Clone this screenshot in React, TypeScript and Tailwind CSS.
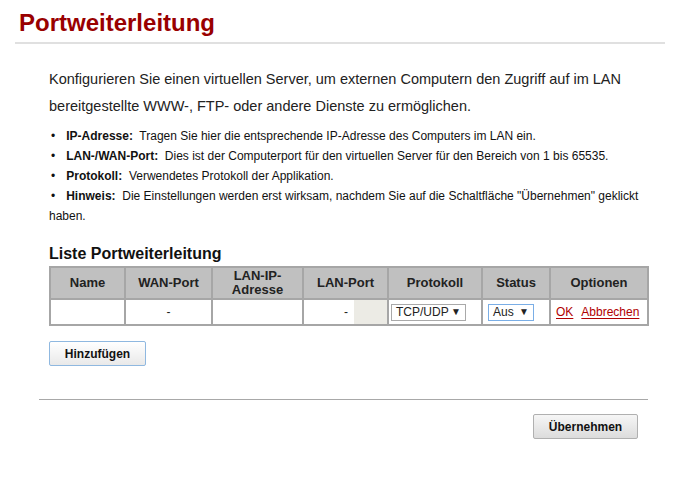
const FONT = { fontFamily: '"Liberation Sans", Arial, sans-serif' };

const BULLETS: [string, string][] = [
  ['IP-Adresse:', 'Tragen Sie hier die entsprechende IP-Adresse des Computers im LAN ein.'],
  ['LAN-/WAN-Port:', 'Dies ist der Computerport für den virtuellen Server für den Bereich von 1 bis 65535.'],
  ['Protokoll:', 'Verwendetes Protokoll der Applikation.'],
  ['Hinweis:', 'Die Einstellungen werden erst wirksam, nachdem Sie auf die Schaltfläche "Übernehmen" geklickt haben.'],
];

const COLS = [
  { label: 'Name', w: 'w-[75px]' },
  { label: 'WAN-Port', w: 'w-[87px]' },
  { label: 'LAN-IP-\nAdresse', w: 'w-[91px]' },
  { label: 'LAN-Port', w: 'w-[85px]' },
  { label: 'Protokoll', w: 'w-[94px]' },
  { label: 'Status', w: 'w-[68px]' },
  { label: 'Optionen', w: 'w-[98px]' },
];

function FakeSelect({ value, focused, className }: { value: string; focused?: boolean; className: string }) {
  return (
    <span
      className={
        'inline-flex h-[17px] items-center justify-between bg-white px-[4px] text-[12px] leading-none text-[#222] border ' +
        (focused ? 'border-[#7aaee6] ' : 'border-[#a9a9a9] ') +
        className
      }
    >
      <span>{value}</span>
      <span className="text-[10px]">▼</span>
    </span>
  );
}

export default function App() {
  return (
    <div className="min-h-[477px] w-[688px] bg-white text-[#222]" style={FONT}>
      {/* Titel */}
      <div className="pl-[15px] pr-[23px] pt-[9px]">
        <h1 className="border-b-2 border-[#e0e0e0] pb-[5px] pl-[4px] text-[24px] font-bold leading-[28px] text-[#990000]">
          Portweiterleitung
        </h1>
      </div>

      <div className="pl-[49px] pr-[40px]">
        <p className="mt-[22px] text-[14.5px] leading-[27px] text-[#222]">
          Konfigurieren Sie einen virtuellen Server, um externen Computern den Zugriff auf im LAN bereitgestellte
          WWW-, FTP- oder andere Dienste zu ermöglichen.
        </p>

        <ul className="mt-[6px] text-[12px] leading-[20px] text-[#111]">
          {BULLETS.map(([k, v]) => (
            <li key={k}>
              <span className="ml-[2px] mr-[11px]">•</span>
              <span className="font-bold">{k}</span>
              <span>{'\u00a0 '}{v}</span>
            </li>
          ))}
        </ul>

        <h2 className="mt-[18px] text-[16px] font-bold leading-[20px] text-[#111]">Liste Portweiterleitung</h2>

        {/* Tabelle */}
        <table className="mt-[2px] w-[599px] table-fixed border-collapse border-2 border-[#a6a6a6] text-[13px]">
          <thead>
            <tr className="h-[32px] bg-[#c0c0c0]">
              {COLS.map((c) => (
                <th
                  key={c.label}
                  className={'whitespace-pre-line border-2 border-[#a6a6a6] px-1 font-bold leading-[14px] text-[#222] ' + c.w}
                >
                  {c.label}
                </th>
              ))}
            </tr>
          </thead>
          <tbody>
            <tr className="h-[26px] text-[12px]">
              <td className="border-2 border-[#a6a6a6]" />
              <td className="border-2 border-[#a6a6a6] text-center">-</td>
              <td className="border-2 border-[#a6a6a6]" />
              <td className="border-2 border-[#a6a6a6] p-0">
                <div className="flex h-[24px] items-center justify-end">
                  <span className="mr-[6px]">-</span>
                  <span className="h-full w-[33px] bg-[#ecebe5]" />
                </div>
              </td>
              <td className="border-2 border-[#a6a6a6] pl-[2px]">
                <FakeSelect value="TCP/UDP" className="w-[75px]" />
              </td>
              <td className="border-2 border-[#a6a6a6] pl-[5px]">
                <FakeSelect value="Aus" focused className="w-[46px]" />
              </td>
              <td className="border-2 border-[#a6a6a6] pl-[5px] text-[12px] text-[#b00000]">
                <a className="underline underline-offset-2">OK</a>
                <a className="ml-[8px] underline underline-offset-2">Abbrechen</a>
              </td>
            </tr>
          </tbody>
        </table>

        <button className="mt-[15px] h-[25px] w-[97px] rounded-[2px] border border-[#8fb8e0] bg-gradient-to-b from-white to-[#e9e9e9] text-[12px] font-bold text-[#111]">
          Hinzufügen
        </button>
      </div>

      <div className="ml-[39px] mr-[40px] mt-[33px] border-t border-[#a8a8a8]" />

      <div className="mr-[50px] mt-[14px] flex justify-end">
        <button className="h-[25px] w-[105px] rounded-[2px] border border-[#b0b0b0] bg-gradient-to-b from-[#f6f6f6] to-[#dcdcdc] text-[12px] font-bold text-[#111]">
          Übernehmen
        </button>
      </div>
    </div>
  );
}
